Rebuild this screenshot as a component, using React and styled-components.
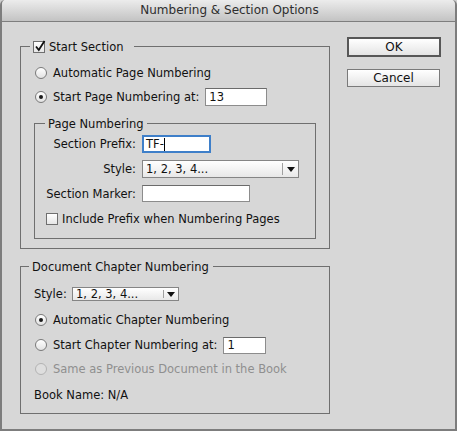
import React from "react";
import styled, { createGlobalStyle, css } from "styled-components";

const GlobalStyle = createGlobalStyle`
  html, body { margin: 0; padding: 0; background: #cfcfcf; }
  * { box-sizing: border-box; }
`;

const Window = styled.div`
  width: 457px;
  height: 431px;
  display: flex;
  flex-direction: column;
  background: #d7d7d7;
  border: 2px solid #7d7d7d;
  border-top: none;
  border-radius: 5px 5px 0 0;
  overflow: hidden;
  font-family: "DejaVu Sans", "Liberation Sans", sans-serif;
  font-size: 11.5px;
  color: #111;
`;

const TitleBar = styled.div`
  height: 22px;
  flex: 0 0 22px;
  border-bottom: 1px solid #7e7e7e;
  background: linear-gradient(#ececec, #c3c3c3);
  display: flex;
  justify-content: center;
  align-items: center;
`;

const Title = styled.div`
  font-size: 12px;
  line-height: 21px;
  color: #2e2e2e;
  padding-left: 2px;
`;

const Body = styled.div`
  display: grid;
  grid-template-columns: 310px 94px;
  column-gap: 17px;
  align-items: start;
  padding: 15px 0 0 18px;
`;

const LeftColumn = styled.div`
  display: flex;
  flex-direction: column;
  padding-top: 2px;
`;

const Group = styled.fieldset`
  margin: ${(p) => p.$mt || 0}px 0 0 0;
  padding: 0;
  min-width: 0;
  border: 1px solid #6f6f6f;
  ${(p) => p.$width && css`width: ${p.$width}px;`}
`;

const Legend = styled.legend`
  margin-left: ${(p) => p.$ml}px;
  padding: 1px ${(p) => p.$pr || 3}px 0 3px;
  line-height: 14px;
  display: flex;
  align-items: center;
  gap: 4px;
  white-space: nowrap;
`;

const GroupBody = styled.div`
  padding: ${(p) => p.$pad};
  display: flex;
  flex-direction: column;
`;

const Row = styled.div`
  display: flex;
  align-items: center;
  height: ${(p) => p.$h || 18}px;
  margin-top: ${(p) => p.$mt || 0}px;
  padding-left: ${(p) => p.$pl || 0}px;
  gap: ${(p) => (p.$gap == null ? 6 : p.$gap)}px;
  color: ${(p) => (p.$disabled ? "#8f8f8f" : "#111")};
  white-space: nowrap;
`;

const Label = styled.span`
  line-height: 14px;
  ${(p) => p.$w && css`flex: 0 0 ${p.$w}px;`}
`;

const Radio = styled.span`
  position: relative;
  flex: 0 0 12px;
  width: 12px;
  height: 12px;
  border-radius: 50%;
  border: 1px solid ${(p) => (p.$disabled ? "#b3b3b3" : "#7a7a7a")};
  background: ${(p) =>
    p.$disabled ? "#dedede" : "linear-gradient(#ffffff, #e2e2e2)"};
  ${(p) =>
    p.$checked &&
    css`
      &::after {
        content: "";
        position: absolute;
        left: 3px;
        top: 3px;
        width: 4px;
        height: 4px;
        border-radius: 50%;
        background: #1a1a1a;
      }
    `}
`;

const Box = styled.span`
  position: relative;
  flex: 0 0 12px;
  width: 12px;
  height: 12px;
  border: 1px solid #6f6f6f;
  background: linear-gradient(#ffffff, #e6e6e6);
  svg {
    position: absolute;
    left: 0;
    top: -2px;
    overflow: visible;
  }
`;

const Checkbox = ({ checked }) => (
  <Box>
    {checked && (
      <svg width="12" height="12" viewBox="0 0 12 12">
        <path d="M2 6.5 L4.8 10 L10.5 1" fill="none" stroke="#111" strokeWidth="1.8" />
      </svg>
    )}
  </Box>
);

const TextField = styled.div`
  flex: 0 0 ${(p) => p.$w}px;
  width: ${(p) => p.$w}px;
  height: ${(p) => p.$h || 18}px;
  background: #fff;
  border: 1px solid #8c8c8c;
  border-top-color: #6b6b6b;
  padding-left: 3px;
  display: flex;
  align-items: center;
  line-height: 14px;
  ${(p) =>
    p.$focused &&
    css`
      border: 2px solid #3e7fc9;
      padding-left: 2px;
    `}
`;

const Caret = styled.span`
  width: 1px;
  height: 13px;
  background: #000;
`;

const Select = styled.div`
  width: ${(p) => p.$w}px;
  height: ${(p) => p.$h}px;
  border: 1px solid #858585;
  background: linear-gradient(#ffffff, #e8e8e8);
  display: flex;
  align-items: stretch;
`;

const SelectValue = styled.div`
  flex: 1;
  padding-left: 3px;
  display: flex;
  align-items: center;
  line-height: 14px;
`;

const SelectArrow = styled.div`
  flex: 0 0 ${(p) => p.$aw}px;
  display: flex;
  align-items: center;
  justify-content: center;
  border-left: 1px solid #a0a0a0;
  margin: 2px 0;
`;

const Arrow = () => (
  <svg width="8" height="5" viewBox="0 0 8 5">
    <polygon points="0,0 8,0 4,5" fill="#111" />
  </svg>
);

const FormGrid = styled.div`
  display: grid;
  grid-template-columns: 96px auto;
  column-gap: 6px;
  row-gap: 7px;
  align-items: center;
  justify-items: start;
  padding-left: 5px;
`;

const GridLabel = styled.span`
  justify-self: end;
  line-height: 14px;
  white-space: nowrap;
`;

const ButtonColumn = styled.div`
  display: flex;
  flex-direction: column;
  align-items: flex-start;
`;

const Button = styled.div`
  width: ${(p) => p.$w}px;
  height: ${(p) => p.$h}px;
  margin-top: ${(p) => p.$mt || 0}px;
  border: ${(p) => (p.$default ? "2px solid #575757" : "1px solid #7a7a7a")};
  background: linear-gradient(#ffffff, #e4e4e4);
  display: flex;
  align-items: center;
  justify-content: center;
  font-size: 12px;
  line-height: 14px;
  color: #111;
`;

export default function App() {
  return (
    <>
      <GlobalStyle />
      <Window>
        <TitleBar>
          <Title>Numbering &amp; Section Options</Title>
        </TitleBar>
        <Body>
          <LeftColumn>
            <Group $width={310}>
              <Legend $ml={9} $pr={11}>
                <Checkbox checked />
                <span>Start Section</span>
              </Legend>
              <GroupBody $pad="10px 13px 9px 13px">
                <Row $pl={1}>
                  <Radio />
                  <Label>Automatic Page Numbering</Label>
                </Row>
                <Row $pl={1} $mt={6}>
                  <Radio $checked />
                  <Label $w={146}>Start Page Numbering at:</Label>
                  <TextField $w={62}>13</TextField>
                </Row>
                <Group $mt={10}>
                  <Legend $ml={10} $pr={4}>
                    Page Numbering
                  </Legend>
                  <GroupBody $pad="4px 0 12px 0">
                    <FormGrid>
                      <GridLabel>Section Prefix:</GridLabel>
                      <TextField $w={69} $focused>
                        TF-
                        <Caret />
                      </TextField>
                      <GridLabel>Style:</GridLabel>
                      <Select $w={157} $h={18}>
                        <SelectValue>1, 2, 3, 4...</SelectValue>
                        <SelectArrow $aw={16}>
                          <Arrow />
                        </SelectArrow>
                      </Select>
                      <GridLabel>Section Marker:</GridLabel>
                      <TextField $w={108} $h={17} />
                    </FormGrid>
                    <Row $h={14} $mt={10} $pl={11} $gap={4}>
                      <Checkbox />
                      <Label>Include Prefix when Numbering Pages</Label>
                    </Row>
                  </GroupBody>
                </Group>
              </GroupBody>
            </Group>

            <Group $width={310} $mt={10}>
              <Legend $ml={8} $pr={4}>
                Document Chapter Numbering
              </Legend>
              <GroupBody $pad="13px 13px 11px 13px">
                <Row $h={14} $gap={0}>
                  <Label $w={38}>Style:</Label>
                  <Select $w={107} $h={14}>
                    <SelectValue>1, 2, 3, 4...</SelectValue>
                    <SelectArrow $aw={15}>
                      <Arrow />
                    </SelectArrow>
                  </Select>
                </Row>
                <Row $pl={1} $mt={10}>
                  <Radio $checked />
                  <Label>Automatic Chapter Numbering</Label>
                </Row>
                <Row $pl={1} $mt={7}>
                  <Radio />
                  <Label $w={164}>Start Chapter Numbering at:</Label>
                  <TextField $w={43} $h={17}>1</TextField>
                </Row>
                <Row $pl={1} $mt={6} $disabled>
                  <Radio $disabled />
                  <Label>Same as Previous Document in the Book</Label>
                </Row>
                <Row $h={14} $mt={10}>
                  <Label>Book Name: N/A</Label>
                </Row>
              </GroupBody>
            </Group>
          </LeftColumn>
          <ButtonColumn>
            <Button $default $w={94} $h={20}>OK</Button>
            <Button $w={93} $h={18} $mt={12}>Cancel</Button>
          </ButtonColumn>
        </Body>
      </Window>
    </>
  );
}
